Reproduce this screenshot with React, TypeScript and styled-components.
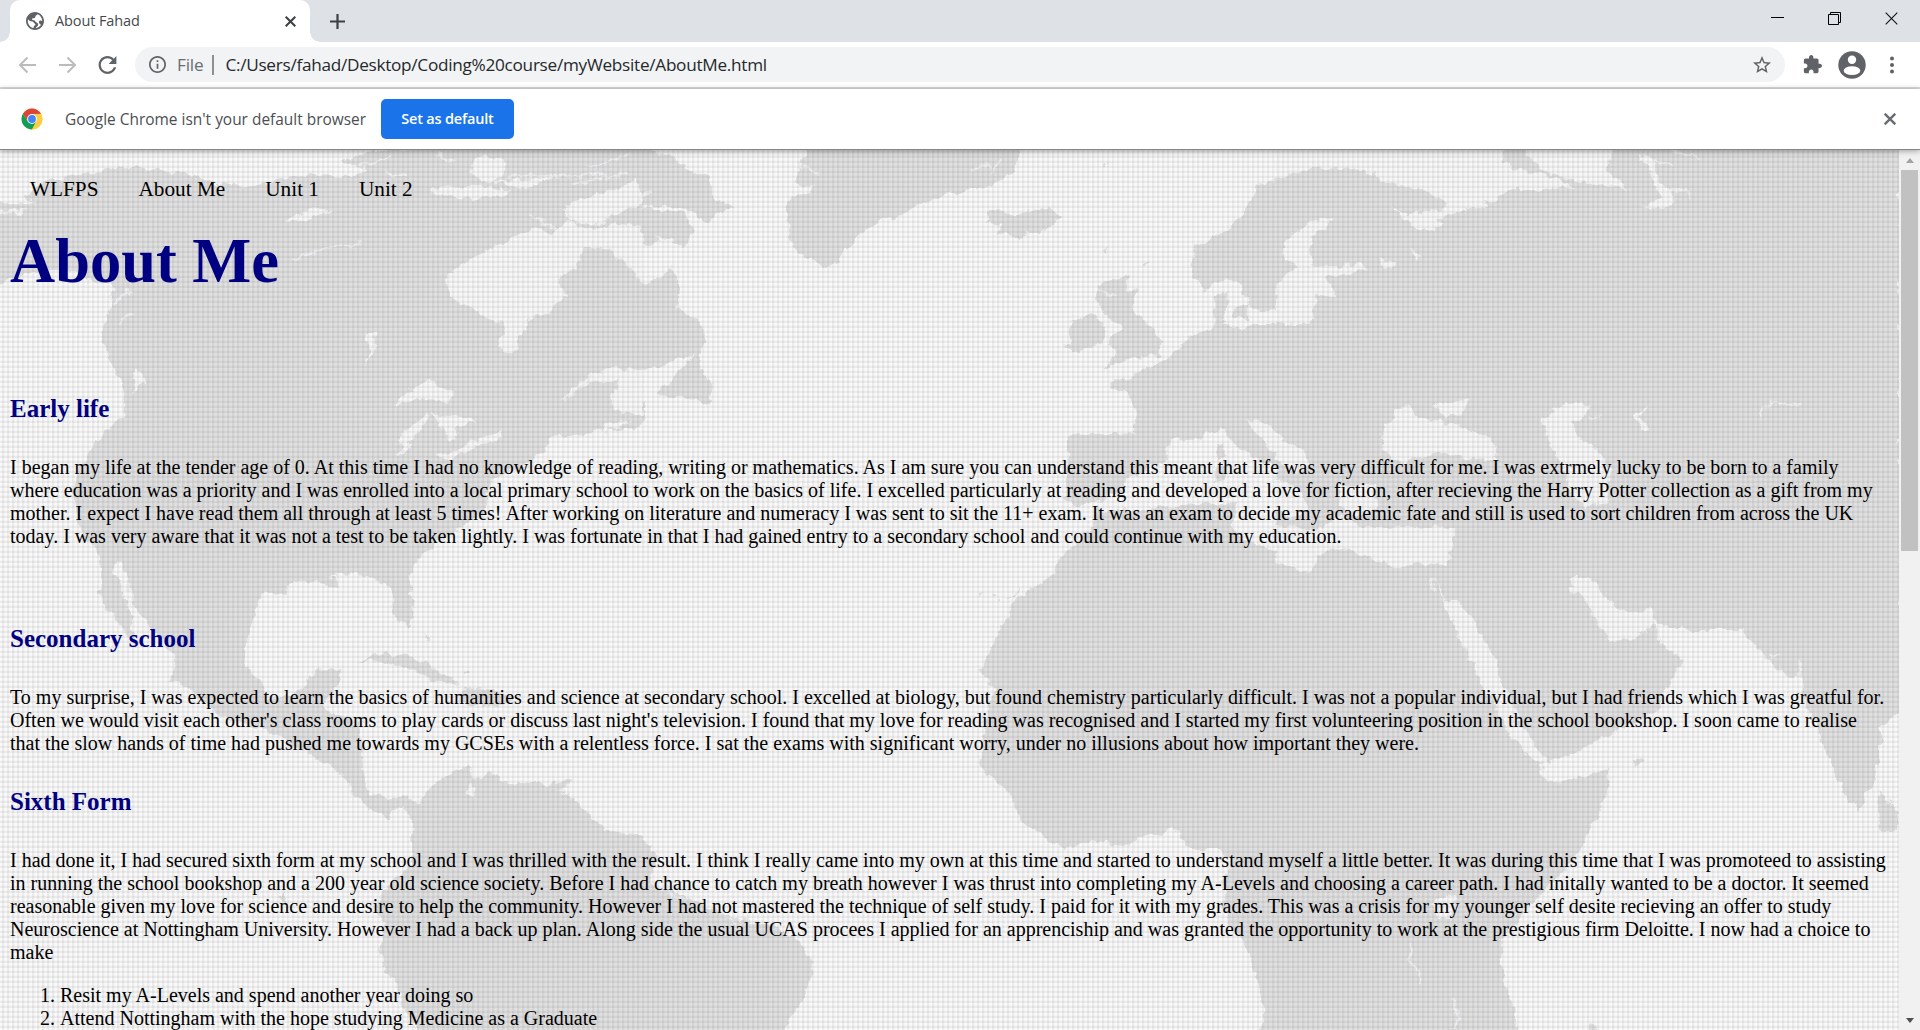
import React from "react";
import styled, { createGlobalStyle } from "styled-components";

const GlobalStyle = createGlobalStyle`
  html, body { margin: 0; padding: 0; overflow: hidden; background: #fff; }
  * { box-sizing: border-box; }
`;

const ui = `"Open Sans", "Noto Sans", sans-serif`;

const Window = styled.div`
  width: 1920px;
  height: 1030px;
  display: flex;
  flex-direction: column;
  overflow: hidden;
  font-family: ${ui};
`;

const TabStrip = styled.div`
  height: 42px;
  flex: none;
  display: flex;
  background: #dee1e6;
  padding-left: 10px;
`;

const Tab = styled.div`
  position: relative;
  width: 300px;
  height: 42px;
  display: flex;
  align-items: center;
  padding: 0 14.5px 0 16px;
  background: #fff;
  border-radius: 10px 10px 0 0;
  &::before, &::after {
    content: "";
    position: absolute;
    bottom: 0;
    width: 10px;
    height: 10px;
  }
  &::before { left: -10px; background: radial-gradient(circle at 0 0, transparent 9.5px, #fff 10px); }
  &::after { right: -10px; background: radial-gradient(circle at 100% 0, transparent 9.5px, #fff 10px); }
`;

const TabTitle = styled.span`
  flex: 1;
  margin-left: 11px;
  font-size: 14.5px;
  letter-spacing: -0.1px;
  line-height: 20px;
  color: #45494d;
`;

const NewTab = styled.div`
  width: 55px;
  display: flex;
  align-items: center;
  justify-content: center;
`;

const WindowButtons = styled.div`
  margin-left: auto;
  height: 37px;
  display: flex;
  gap: 44px;
  align-items: center;
  padding-right: 22px;
`;

const Toolbar = styled.div`
  height: 47px;
  flex: none;
  display: flex;
  align-items: center;
  border-bottom: 2px solid #dadbdc;
  padding-left: 17px;
`;

const NavButtons = styled.div`
  display: flex;
  gap: 19px;
  width: 118px;
`;

const Omnibox = styled.div`
  flex: none;
  width: 1650px;
  height: 35px;
  display: flex;
  align-items: center;
  border-radius: 18px;
  background: #f1f3f4;
  padding: 0 14px 0 14px;
  font-size: 17.2px;
  white-space: nowrap;
`;

const Scheme = styled.span`
  margin-left: 11px;
  padding-right: 9px;
  color: #6a6e73;
  line-height: 20px;
  letter-spacing: -0.2px;
  border-right: 2px solid #8d9094;
`;

const Url = styled.span`
  flex: 1;
  margin-left: 11px;
  color: #26282b;
  letter-spacing: -0.28px;
`;

const ToolIcons = styled.div`
  display: flex;
  align-items: center;
  margin-left: 18px;
`;

const Avatar = styled.div`
  display: flex;
  margin: 0 23px 0 16px;
`;

const InfoBar = styled.div`
  position: relative;
  z-index: 1;
  height: 61px;
  flex: none;
  display: flex;
  align-items: center;
  padding: 0 24px 0 21px;
  background: #fff;
  border-bottom: 1px solid #858585;
  box-shadow: 0 1px 6px rgba(0, 0, 0, 0.35);
`;

const InfoText = styled.span`
  width: 316px;
  margin-left: 22px;
  font-size: 15.45px;
  color: #4b4f53;
  white-space: nowrap;
`;

const DefaultButton = styled.button`
  width: 133px;
  height: 40px;
  margin-right: auto;
  padding: 0 0 1px;
  border: 0;
  border-radius: 5px;
  background: #1a73e8;
  color: #fff;
  font: 600 14.5px ${ui};
  letter-spacing: -0.2px;
`;

const Viewport = styled.div`
  flex: 1;
  min-height: 0;
  display: flex;
`;

const Page = styled.main`
  position: relative;
  width: 1899px;
  overflow: hidden;
  padding: 27px 0 0 10px;
  background: #fff;
  font-family: "Liberation Serif", "Times New Roman", serif;
  font-size: 20px;
  line-height: 23px;
  color: #000;
`;

const Backdrop = styled.div`
  position: absolute;
  inset: 0;
  svg { display: block; }
  &::after {
    content: "";
    position: absolute;
    inset: 0;
    background:
      repeating-linear-gradient(90deg, rgba(0,0,0,.008) 0 2px, rgba(0,0,0,.062) 2px 4px, rgba(0,0,0,.025) 4px 5px),
      repeating-linear-gradient(0deg, rgba(0,0,0,.008) 0 2px, rgba(0,0,0,.062) 2px 4px, rgba(0,0,0,.025) 4px 5px);
  }
`;

const Content = styled.div`
  position: relative;
  white-space: nowrap;
`;

const SiteNav = styled.nav`
  display: flex;
  gap: 40px;
  padding-left: 20px;
  font-size: 21.25px;
  line-height: 24px;
`;

const Title = styled.h1`
  margin: 25px 0 98px;
  font-size: 62.5px;
  line-height: 70px;
  color: navy;
`;

const Section = styled.section<{ $gap: number }>`
  margin-bottom: ${(p) => p.$gap}px;
`;

const Heading = styled.h2`
  margin: 0 0 33px;
  font-size: 25px;
  line-height: 29px;
  color: navy;
`;

const Paragraph = styled.p`
  margin: 0;
`;

const Choices = styled.ol`
  margin: 20px 0 0;
  padding-left: 50px;
`;

const ScrollTrack = styled.div`
  width: 21px;
  display: flex;
  flex-direction: column;
  align-items: center;
  justify-content: space-between;
  background: #f1f1f1;
`;

const ScrollArrow = styled.div<{ $down?: boolean }>`
  width: 0;
  height: 0;
  margin: ${(p) => (p.$down ? "0 0 7px" : "8px 0 7px")};
  border: 4.5px solid transparent;
  border-top: ${(p) => (p.$down ? "5px solid #505050" : "0")};
  border-bottom: ${(p) => (p.$down ? "0" : "5px solid #a3a3a3")};
`;

const ScrollThumb = styled.div`
  width: 17px;
  height: 381px;
  margin-bottom: auto;
  background: #c1c1c1;
`;

type Tile = { x: number; y: number; land: string; water: string; hair?: string };

// Continents, split into six survey tiles that each use a 1568 x 1350 grid.
const tiles: Tile[] = [
  {
    x: 0, y: 140,
    land: "M-9 190 90 190 60 170 120 120 200 100 310 78 400 95 480 105 520 135 600 140 700 115 760 105 860 108 900 85 830 62 900 40 1000 20 1575 20V860L1450 880 1350 890 1330 940 1280 980 1200 1020 1190 1100 1150 1150 1080 1200 1030 1250 1000 1310 1012 1358H960L950 1330 880 1300 800 1310 720 1320 690 1358H315V1290L290 1265 275 1300 300 1358H250L245 1250 190 1150 180 1030 205 960 240 900 300 830 310 760 280 680 250 600 270 500 280 440 230 420 160 385 100 390-9 430Z",
    water: "M1310 262 1230 310 1130 370 1090 420 1100 470 1150 500 1200 540 1240 550 1220 620 1240 645 1270 620 1290 540 1340 520 1385 470 1370 420 1420 370 1440 320 1500 330 1575 430V260L1500 250 1440 270 1390 240 1350 280ZM960 790 1010 745 1050 722 1110 760 1100 785 1040 775 1000 790ZM975 940 990 870 1050 815 1040 850 1000 920 985 950ZM1060 820 1150 830 1165 850 1115 855 1120 900 1100 905 1085 860ZM1070 950 1150 910 1230 870 1225 890 1150 930 1100 960ZM1370 785 1430 715 1500 685 1575 690V815L1530 825 1495 785 1520 720 1440 730ZM1450 890 1490 850 1550 840 1500 865ZM895 580 925 575 920 610 895 680 905 620ZM1160 55 1230 50 1240 100 1200 130 1150 100ZM1390 190 1500 150 1560 120 1575 190 1520 220 1450 260 1380 230ZM700 240 760 205 820 210 770 230 710 250ZM1050 145 1180 135 1250 155 1170 180 1090 165ZM-9 210 70 205 40 220-9 225ZM340 690 355 720 330 760 325 710ZM1190 125 1360 110 1290 145Z",
    hair: "M715 360 800 325 890 312M1290 225 1360 265M1375 205 1415 245M1245 110 1480 105M1440 80 1540 45M1400 130 1540 100M880 75 960 50M945 105H1000M1380 780 1450 710M1120 70 1070 40M320 450 275 490M330 520 290 550",
  },
  {
    x: 640, y: 140,
    land: "M-9 20 80 50 110 80 170 110 180 165 225 205 190 225 165 250 130 215 50 195-9 200ZM-9 200 100 215 130 260 110 320 60 300-9 320ZM-9 435 50 410 80 385 100 440 90 500 150 550 165 600 150 640 90 660 40 680-9 695ZM45 765 80 710 120 660 140 640 150 690 180 730 170 795 130 780 105 770ZM415 20 380 100 385 130 430 145 370 170 355 210 365 270 375 320 400 350 430 360 450 385 475 370 510 320 560 260 640 220 740 165 850 140 915 100 935 20ZM850 215 890 210 920 225 1000 200 1030 235 990 270 930 292 870 280 885 255 850 245ZM1135 320 1150 315 1143 345ZM1230 375 1247 358 1240 380ZM1135 78 1152 73 1140 82ZM1120 440 1200 405 1195 445 1220 455 1205 500 1240 550 1280 600 1270 645 1210 655 1130 685 1170 640 1140 610 1185 560 1145 530 1120 480ZM1060 545 1110 520 1140 560 1130 610 1060 640 1045 620ZM1575 120 1510 140 1480 220 1440 270 1360 320 1350 410 1390 445 1450 415 1470 440 1490 490 1520 520 1575 500ZM1575 555 1500 555 1450 570 1425 540 1445 450 1410 475 1410 560 1340 590 1310 640 1250 680 1210 710 1150 725 1150 745 1190 760 1215 810 1210 880 1100 885 1065 878 1045 890 1050 960 1040 1080 1060 1095 1100 1090 1180 1060 1200 1010 1290 960 1300 900 1370 895 1420 865 1450 900 1500 950 1575 1000ZM1410 920 1430 910 1440 950 1415 960ZM1410 985 1440 975 1435 1030 1410 1030ZM985 1358 1030 1250 1060 1215 1110 1160 1120 1110 1200 1115 1280 1100 1460 1090 1450 1150 1480 1200 1575 1240V1358ZM1455 500 1490 490 1490 540 1455 530ZM-9 780 15 785 10 815-9 830Z",
    water: "M1490 830 1520 845 1575 890V960L1525 900 1495 860ZM30 290 80 295 70 310Z",
    hair: "M385 75 440 100M810 90 860 75M880 55 860 95M1120 450 1160 470M20 150-5 180",
  },
  {
    x: 1280, y: 140,
    land: "M-9 20H1519V1358H-9Z",
    water: "M-9 20H550L545 70 600 90 680 115 720 140 640 150 560 150 500 195 440 205 410 190 350 150 270 130 200 90 110 80-9 115ZM600 20H820L800 90 860 150 700 115 640 90ZM270 200 310 225 400 205 430 160 460 210 380 240 405 255 360 275 310 240ZM880 40 915 60 930 120 965 165 950 205 885 195 935 180 910 110ZM75 240 135 235 80 290 75 340 80 380 200 375 215 390 115 410 140 470 90 460 80 540 50 555-9 545V430L40 380 5 340 10 310ZM240 350 285 370 265 385ZM320 320 345 350 335 358ZM315 790 345 830 380 845 430 850 520 900 535 950 480 960 400 935 350 950 300 965 250 930 250 890 285 810ZM375 800 465 775 440 830 390 825ZM640 840 700 785 755 800 750 830 710 850 730 890 780 930 810 990 800 1090 750 1100 710 1060 700 1000 660 910ZM870 820 910 800 880 830 905 865 890 868 875 840ZM-9 890 60 940 75 985 40 1000-9 960ZM-9 1010 50 1050 70 1110 30 1130-9 1110ZM140 1040 230 1030 240 1100 190 1130 150 1100ZM-9 1155 90 1170 150 1125 200 1160 380 1160 430 1165 410 1275 330 1270 290 1285 170 1230 130 1225 90 1250 85 1300 50 1290-9 1265ZM740 1310 775 1358H725L710 1340ZM500 130H545L530 145H510Z",
    hair: "M900 50 960 75M960 30 1030 60M950 150 995 145 1010 175M1180 835 1180 805 1210 790 1270 795M370 1310 375 1355M755 830H780",
  },
  {
    x: 0, y: 580,
    land: "M245-9H290L305 60 320 110 338 210 305 150 250 70ZM315-9H690L640 50 620 110 605 200 600 260 640 310 650 360 720 345 750 310 770 270 840 265 825 320 790 370 800 400 850 410 880 440 890 500 885 560 900 630 950 660 985 645 1025 670 1060 610 1150 555 1160 600 1200 575 1250 610 1330 610 1390 640 1440 700 1480 750 1575 768V1358H1020L980 1240 930 1130 940 1030 920 990 960 900 1010 850 1010 720 985 670 950 720 890 680 850 600 800 550 740 510 690 470 640 440 560 420 500 370 440 300 415 300 430 230 360 130 330 70ZM690-9H830L820 20ZM950-9H1000L1015 90 1000 140 970 120 960 60ZM885 250 940 215 1010 230 1070 270 1130 310 1090 315 1030 280 950 245ZM1140 320 1210 330 1260 360 1200 380 1130 365ZM1040 165 1055 190 1045 185ZM1130 280 1155 270 1145 285ZM685 945 705 940 700 965ZM1350 605 1400 600 1380 630 1340 625Z",
    water: "M1150 610 1165 620 1160 650 1145 640Z",
    hair: "M315 0 325 80",
  },
  {
    x: 640, y: 580,
    land: "M-9 765 40 810 30 920 90 940 220 1010 330 1040 410 1100 425 1180 400 1260 370 1310 350 1358H-9ZM1000-9H1575V1358H1510L1530 1290 1510 1200 1480 1090 1430 990 1430 900 1450 840 1420 810 1350 810 1310 745 1170 800 1110 780 1040 808 930 720 905 640 835 560 835 510 850 400 870 330 835 270 870 180 920 60ZM825 35 835 35 830 45ZM850 45 865 40 860 55ZM905 50 930 18 915 52ZM875 58 885 58 880 68Z",
    water: "",
    hair: "M60 940 110 960M200 1010 240 1030",
  },
  {
    x: 1280, y: 580,
    land: "M-9-9H1519V400L1470 440 1470 520 1450 620 1415 690 1390 660 1340 520 1290 370 1275 290 1240 290 1190 230 1130 150 1020 150 920 130 935 190 990 240 950 310 930 390 800 470 700 530 650 550 635 580 660 610 740 590 810 565 800 650 740 800 690 880 600 990 540 1080 545 1200 575 1290 570 1358H-9ZM1470 630 1516 700 1510 750 1480 755 1465 690ZM755 1358 765 1325 780 1358ZM860 540 890 545 880 555 862 552Z",
    water: "M370-9 400 60 450 200 500 320 560 460 640 560 655 545 600 450 540 300 520 220 470 120 430 60 405 60ZM710-9H755L820 80 860 100 905 90 925 130 870 175 810 180 780 130ZM370 970 430 940 430 990 390 1015Z",
    hair: "M318 1090 320 1140 350 1215M425 1255 435 1320 430 1350M1200 235 1222 222M1275 290 1272 240",
  },
];

const WorldMap = () => (
  <svg width="1899" height="880" viewBox="0 150 1899 880">
    <defs>
      <filter id="coast" x="0" y="0" width="100%" height="100%" colorInterpolationFilters="sRGB">
        <feTurbulence type="fractalNoise" baseFrequency="0.09" numOctaves="3" seed="8" result="n" />
        <feDisplacementMap in="SourceGraphic" in2="n" scale="11" xChannelSelector="R" yChannelSelector="G" />
      </filter>
    </defs>
    <g filter="url(#coast)">
      <rect x="-20" y="130" width="1940" height="920" fill="#fefefe" />
      {tiles.map((t, i) => (
        <path key={i} d={t.land} fill="#e4e4e5" transform={`translate(${t.x} ${t.y}) scale(.408163 .333333)`} />
      ))}
      {tiles.map((t, i) => (
        <g key={i} transform={`translate(${t.x} ${t.y}) scale(.408163 .333333)`}>
          <path d={t.water} fill="#fcfcfd" />
          <path d={t.hair} fill="none" stroke="#f5f6f8" strokeWidth="6" />
        </g>
      ))}
    </g>
  </svg>
);

const Globe = () => (
  <svg width="18" height="18" viewBox="2 2 20 20" fill="#5f6368">
    <path d="M12 2C6.480 2 2 6.480 2 12s4.480 10 10 10 10-4.480 10-10S17.520 2 12 2zM4 12c0-.8.1-1.300.3-1.900 1.200 1.700 2.700 2.400 4.700 2.400 1.700 0 1.500 2 3 2.500 1 .4.500 1.800-.7 2.300-.8.400-.8 1.400-.8 2.500C6.700 19.100 4 15.900 4 12zm8.800 7.900c.2-1.400 2.200-1.700 2.700-3.400.500-1.600-.7-2.500-2-2.900-1.500-.5-1-2.100-2.800-2.300-1.500-.2-2.700-.8-1.700-2 .8-.9 2.200.3 3-.8.600-1 .2-2.300 1.500-2.900.600-.3 1.100-.4 1.500-1C18 5.900 20 8.700 20 12c-1.300-1-3.200-.7-3.600.7-.4 1.500 1 2.200 2.300 3.600C17.300 18.400 15.400 19.700 12.800 19.900z" />
  </svg>
);

const Cross = ({ size, color, width }: { size: number; color: string; width: number }) => (
  <svg width={size} height={size} viewBox={`0 0 ${size} ${size}`} stroke={color} strokeWidth={width}>
    <path d={`M.7.7 ${size - 0.7} ${size - 0.7}M${size - 0.7}.7.7 ${size - 0.7}`} />
  </svg>
);

const Arrow = ({ flip }: { flip?: boolean }) => (
  <svg width="21" height="20" viewBox="0 0 21 20" fill="none" stroke="#babcbe" strokeWidth="2">
    <path transform={flip ? "translate(21 0) scale(-1 1)" : undefined} d="M19 10H3.500M10.500 2.500 3 10 10.500 17.500" />
  </svg>
);

const ChromeLogo = () => (
  <svg width="22" height="22" viewBox="-11 -11 22 22">
    <circle r="10.500" fill="#ffcd40" />
    <path d="M-9.090-5.250A10.500 10.500 0 0 1 9.090-5.250L0-5-4.330 2.500Z" fill="#db4437" />
    <path d="M-9.090-5.250A10.500 10.500 0 0 0 0 10.500L4.330 2.500-4.330 2.500Z" fill="#0f9d58" />
    <path d="M0-5H9.200A10.500 10.500 0 0 1 0 10.500L4.330 2.500Z" fill="#ffcd40" />
    <circle r="4.900" fill="#f4f6f8" />
    <circle r="3.900" fill="#4285f4" />
  </svg>
);

const App = () => (
  <Window>
    <GlobalStyle />
    <TabStrip>
      <Tab>
        <Globe />
        <TabTitle>About Fahad</TabTitle>
        <Cross size={11} color="#3c4043" width={2} />
      </Tab>
      <NewTab>
        <svg width="15" height="15" viewBox="0 0 15 15" stroke="#3c4043" strokeWidth="2.200">
          <path d="M7.500 0V15M0 7.500H15" />
        </svg>
      </NewTab>
      <WindowButtons>
        <svg width="13" height="13" viewBox="0 0 13 13"><rect y="5" width="13" height="1" /></svg>
        <svg width="13" height="13" viewBox="0 0 13 13" fill="none" stroke="#000">
          <path d="M.5 2.500H10.500V12.500H.5ZM2.500 2.500V.5H12.500V10.500H10.500" />
        </svg>
        <Cross size={13} color="#111" width={1.1} />
      </WindowButtons>
    </TabStrip>
    <Toolbar>
      <NavButtons>
        <Arrow />
        <Arrow flip />
        <svg width="21" height="20" viewBox="3 3 18 18" fill="#5f6368">
          <path d="M17.650 6.350C16.200 4.900 14.210 4 12 4c-4.420 0-7.990 3.580-7.990 8s3.570 8 7.990 8c3.730 0 6.840-2.550 7.730-6h-2.080c-.82 2.330-3.040 4-5.650 4-3.310 0-6-2.690-6-6s2.690-6 6-6c1.660 0 3.140.69 4.220 1.780L13 11h7V4l-2.350 2.350z" />
        </svg>
      </NavButtons>
      <Omnibox>
        <svg width="17" height="17" viewBox="2 2 20 20" fill="#5f6368">
          <path d="M11 7h2v2h-2zm0 4h2v6h-2zm1-9C6.480 2 2 6.480 2 12s4.480 10 10 10 10-4.480 10-10S17.520 2 12 2zm0 18c-4.410 0-8-3.590-8-8s3.590-8 8-8 8 3.590 8 8-3.590 8-8 8z" />
        </svg>
        <Scheme>File</Scheme>
        <Url>C:/Users/fahad/Desktop/Coding%20course/myWebsite/AboutMe.html</Url>
        <svg width="18" height="18" viewBox="2 2 20 20" fill="#5f6368">
          <path d="M22 9.240l-7.190-.62L12 2 9.190 8.630 2 9.240l5.460 4.730L5.820 21 12 17.270 18.180 21l-1.630-7.030L22 9.240zM12 15.400l-3.760 2.270 1-4.280-3.320-2.880 4.380-.38L12 6.100l1.710 4.040 4.380.38-3.320 2.880 1 4.280L12 15.400z" />
        </svg>
      </Omnibox>
      <ToolIcons>
        <svg width="19" height="19" viewBox="1 1 22 22" fill="#5f6368">
          <path d="M20.500 11H19V7c0-1.100-.9-2-2-2h-4V3.500C13 2.120 11.880 1 10.500 1S8 2.120 8 3.500V5H4c-1.100 0-1.990.9-1.990 2v3.800H3.500c1.490 0 2.700 1.210 2.700 2.700s-1.210 2.700-2.700 2.700H2V20c0 1.100.9 2 2 2h3.800v-1.500c0-1.490 1.210-2.700 2.700-2.700s2.700 1.210 2.700 2.700V22H17c1.100 0 2-.9 2-2v-4h1.500c1.380 0 2.500-1.120 2.500-2.500S21.880 11 20.500 11z" />
        </svg>
        <Avatar>
          <svg width="28" height="28" viewBox="0 0 28 28">
            <circle cx="14" cy="14" r="13.700" fill="#5f6368" />
            <circle cx="14" cy="8.700" r="4.200" fill="#fff" />
            <ellipse cx="14" cy="19.700" rx="8.300" ry="4.400" fill="#fff" />
          </svg>
        </Avatar>
        <svg width="6" height="20" viewBox="0 0 6 20" fill="#5f6368">
          <circle cx="3" cy="3.500" r="2" /><circle cx="3" cy="10" r="2" /><circle cx="3" cy="16.500" r="2" />
        </svg>
      </ToolIcons>
    </Toolbar>
    <InfoBar>
      <ChromeLogo />
      <InfoText>Google Chrome isn't your default browser</InfoText>
      <DefaultButton>Set as default</DefaultButton>
      <Cross size={12} color="#696c70" width={2.4} />
    </InfoBar>
    <Viewport>
      <Page>
        <Backdrop><WorldMap /></Backdrop>
        <Content>
          <SiteNav>
            <span>WLFPS</span><span>About Me</span><span>Unit 1</span><span>Unit 2</span>
          </SiteNav>
          <Title>About Me</Title>
          <Section $gap={76}>
            <Heading>Early life</Heading>
            <Paragraph>
              I began my life at the tender age of 0. At this time I had no knowledge of reading, writing or mathematics. As I am sure you can understand this meant that life was very difficult for me. I was extrmely lucky to be born to a family<br />
              where education was a priority and I was enrolled into a local primary school to work on the basics of life. I excelled particularly at reading and developed a love for fiction, after recieving the Harry Potter collection as a gift from my<br />
              mother. I expect I have read them all through at least 5 times! After working on literature and numeracy I was sent to sit the 11+ exam. It was an exam to decide my academic fate and still is used to sort children from across the UK<br />
              today. I was very aware that it was not a test to be taken lightly. I was fortunate in that I had gained entry to a secondary school and could continue with my education.
            </Paragraph>
          </Section>
          <Section $gap={32}>
            <Heading>Secondary school</Heading>
            <Paragraph>
              To my surprise, I was expected to learn the basics of humanities and science at secondary school. I excelled at biology, but found chemistry particularly difficult. I was not a popular individual, but I had friends which I was greatful for.<br />
              Often we would visit each other's class rooms to play cards or discuss last night's television. I found that my love for reading was recognised and I started my first volunteering position in the school bookshop. I soon came to realise<br />
              that the slow hands of time had pushed me towards my GCSEs with a relentless force. I sat the exams with significant worry, under no illusions about how important they were.
            </Paragraph>
          </Section>
          <Section $gap={0}>
            <Heading>Sixth Form</Heading>
            <Paragraph>
              I had done it, I had secured sixth form at my school and I was thrilled with the result. I think I really came into my own at this time and started to understand myself a little better. It was during this time that I was promoteed to assisting<br />
              in running the school bookshop and a 200 year old science society. Before I had chance to catch my breath however I was thrust into completing my A-Levels and choosing a career path. I had initally wanted to be a doctor. It seemed<br />
              reasonable given my love for science and desire to help the community. However I had not mastered the technique of self study. I paid for it with my grades. This was a crisis for my younger self desite recieving an offer to study<br />
              Neuroscience at Nottingham University. However I had a back up plan. Along side the usual UCAS procees I applied for an apprenciship and was granted the opportunity to work at the prestigious firm Deloitte. I now had a choice to<br />
              make
            </Paragraph>
            <Choices>
              <li>Resit my A-Levels and spend another year doing so</li>
              <li>Attend Nottingham with the hope studying Medicine as a Graduate</li>
            </Choices>
          </Section>
        </Content>
      </Page>
      <ScrollTrack>
        <ScrollArrow />
        <ScrollThumb />
        <ScrollArrow $down />
      </ScrollTrack>
    </Viewport>
  </Window>
);

export default App;
